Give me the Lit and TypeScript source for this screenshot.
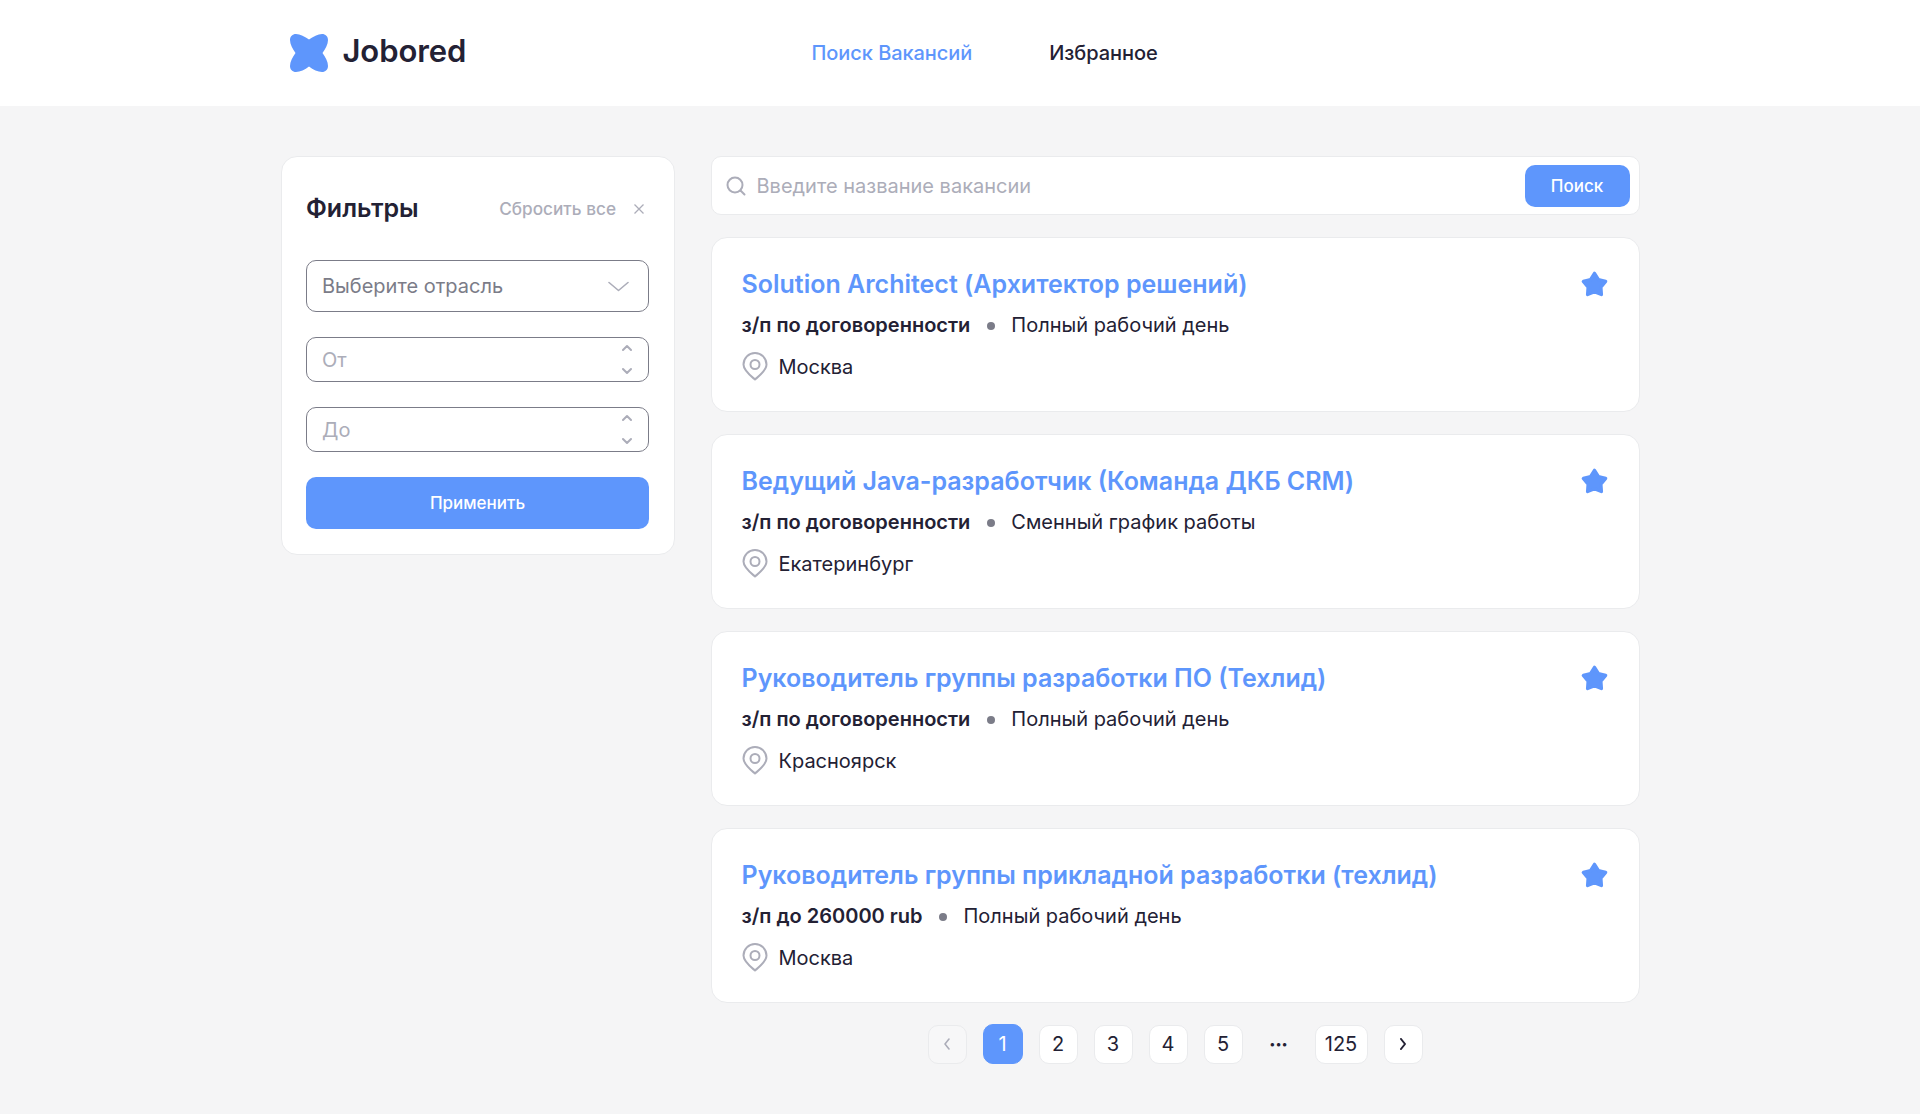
import { css, html, LitElement } from 'lit';
import { customElement } from 'lit/decorators.js';

const vacancies = [
  { title: 'Solution Architect (Архитектор решений)', pay: 'з/п по договоренности', type: 'Полный рабочий день', city: 'Москва' },
  { title: 'Ведущий Java-разработчик (Команда ДКБ CRM)', pay: 'з/п по договоренности', type: 'Сменный график работы', city: 'Екатеринбург' },
  { title: 'Руководитель группы разработки ПО (Техлид)', pay: 'з/п по договоренности', type: 'Полный рабочий день', city: 'Красноярск' },
  { title: 'Руководитель группы прикладной разработки (техлид)', pay: 'з/п до 260000 rub', type: 'Полный рабочий день', city: 'Москва' },
];

const chevron = (d: string, w: number, h: number) => html`
  <svg width=${w} height=${h} viewBox="0 0 ${w} ${h}" fill="none" stroke="currentColor" stroke-width="1.6" stroke-linecap="round" stroke-linejoin="round"><path d=${d}></path></svg>
`;

@customElement('app-root')
export class AppRoot extends LitElement {
  private renderStepper(placeholder: string) {
    return html`
      <div class="field number">
        <input type="text" placeholder=${placeholder} />
        <div class="steps">
          ${chevron('M1 6l4-4 4 4', 10, 8)}
          ${chevron('M1 2l4 4 4-4', 10, 8)}
        </div>
      </div>
    `;
  }

  private renderVacancy(v: (typeof vacancies)[number]) {
    return html`
      <article class="card vacancy">
        <div class="title-row">
          <h2>${v.title}</h2>
          <svg class="star" width="29" height="29" viewBox="0 0 26 26" fill="#5e96fc" stroke="#5e96fc" stroke-width="3" stroke-linejoin="round">
            <path d="M13 3L16.530 8.650L23 10.260L18.710 15.350L19.170 22L13 19.500L6.830 22L7.290 15.350L3 10.260L9.470 8.650Z"></path>
          </svg>
        </div>
        <div class="terms">
          <b>${v.pay}</b>
          <i class="dot"></i>
          <span>${v.type}</span>
        </div>
        <div class="city">
          <svg width="26" height="29" viewBox="0 0 26 29" fill="none" stroke="#acadb9" stroke-width="2">
            <path d="M13 27.500C9 24 1.500 18.500 1.500 12.500A11.500 11.500 0 0 1 24.500 12.500C24.500 18.500 17 24 13 27.500Z" stroke-linejoin="round"></path>
            <circle cx="13" cy="12.500" r="4.500"></circle>
          </svg>
          <span>${v.city}</span>
        </div>
      </article>
    `;
  }

  public render() {
    return html`
      <header>
        <div class="wrap head">
          <div class="brand">
            <svg width="38" height="38" viewBox="0 0 38 38" fill="#5e96fc">
              <path d="M19 5.500C15 2.500 10 0 6 0C2.500 0 0 2.500 0 6C0 10 2.500 15 5.500 19C2.500 23 0 28 0 32C0 35.500 2.500 38 6 38C10 38 15 35.500 19 32.500C23 35.500 28 38 32 38C35.500 38 38 35.500 38 32C38 28 35.500 23 32.500 19C35.500 15 38 10 38 6C38 2.500 35.500 0 32 0C28 0 23 2.500 19 5.500Z"></path>
            </svg>
            <span>Jobored</span>
          </div>
          <nav>
            <a class="active">Поиск Вакансий</a>
            <a>Избранное</a>
          </nav>
        </div>
      </header>

      <main class="wrap">
        <aside class="card filters">
          <div class="filters-head">
            <h3>Фильтры</h3>
            <button class="reset">
              Сбросить все
              <svg width="12" height="12" viewBox="0 0 12 12" fill="none" stroke="currentColor" stroke-width="1.3"><path d="M1.500 1.500l9 9M10.500 1.500l-9 9"></path></svg>
            </button>
          </div>
          <div class="field select">
            <span>Выберите отрасль</span>
            ${chevron('M1 1.500l9.500 8 9.500-8', 21, 11)}
          </div>
          ${this.renderStepper('От')}
          ${this.renderStepper('До')}
          <button class="primary apply">Применить</button>
        </aside>

        <section class="results">
          <div class="card search">
            <svg width="20" height="20" viewBox="0 0 20 20" fill="none" stroke="#acadb9" stroke-width="2" stroke-linecap="round">
              <circle cx="9" cy="9" r="7.500"></circle><path d="M14.500 14.500l4 4"></path>
            </svg>
            <input type="text" placeholder="Введите название вакансии" />
            <button class="primary find">Поиск</button>
          </div>
          ${vacancies.map((v) => this.renderVacancy(v))}
          <div class="pages">
            <span class="page disabled">${chevron('M6 1L2 6l4 5', 8, 12)}</span>
            <span class="page current">1</span>
            <span class="page">2</span>
            <span class="page">3</span>
            <span class="page">4</span>
            <span class="page">5</span>
            <span class="more">•••</span>
            <span class="page wide">125</span>
            <span class="page next">${chevron('M2 1l4 5-4 5', 8, 12)}</span>
          </div>
        </section>
      </main>
    `;
  }

  public static styles = css`
    :host {
      display: block;
      min-height: 1114px;
      background: #f5f5f6;
      color: #232134;
      font-family: Inter, 'Liberation Sans', sans-serif;
    }
    * {
      box-sizing: border-box;
    }
    h2,
    h3 {
      margin: 0;
    }
    input {
      border: 0;
      outline: 0;
      padding: 0;
      width: 0;
      flex: 1;
      background: none;
      font: inherit;
    }
    input::placeholder {
      color: #acadb9;
      opacity: 1;
    }
    button {
      border: 0;
      padding: 0;
      background: none;
      font-family: inherit;
    }
    .wrap {
      width: 1359px;
      margin: 0 auto;
    }
    header {
      height: 106px;
      background: #fff;
    }
    .head {
      display: flex;
      align-items: center;
      height: 100%;
      padding-left: 9px;
    }
    .brand {
      display: flex;
      align-items: center;
      gap: 15px;
      width: 522px;
      margin-top: -1px;
      font-size: 31px;
      font-weight: 600;
      letter-spacing: -0.1px;
      line-height: 38px;
    }
    .brand span {
      margin-top: -4px;
    }
    nav {
      display: flex;
      gap: 77px;
      font-size: 20px;
      font-weight: 500;
      letter-spacing: -0.06px;
    }
    nav .active {
      color: #5e96fc;
    }
    main {
      display: flex;
      align-items: flex-start;
      gap: 36px;
      padding-top: 50px;
    }
    .card {
      background: #fff;
      border: 1px solid #eaebed;
      border-radius: 12px;
    }
    .filters {
      flex: 0 0 394px;
      height: 399px;
      padding: 34px 24.5px 0;
      border-radius: 16px;
    }
    .filters-head {
      display: flex;
      justify-content: space-between;
      align-items: center;
      height: 34px;
      margin-bottom: 35px;
    }
    h3 {
      font-size: 25px;
      font-weight: 600;
    }
    .reset {
      display: flex;
      align-items: center;
      gap: 17px;
      padding-right: 4px;
      margin-top: 1px;
      color: #acadb9;
      font-size: 17.2px;
      font-weight: 500;
    }
    .field {
      display: flex;
      align-items: center;
      border: 1px solid #7b7c88;
      border-radius: 10px;
      padding: 0 15px;
      font-size: 20px;
    }
    .select {
      justify-content: space-between;
      height: 52px;
      margin-bottom: 25px;
      padding-right: 19px;
      color: #7b7c88;
    }
    .select svg {
      color: #acadb9;
    }
    .number {
      height: 45px;
      margin-bottom: 25px;
      padding-right: 16px;
    }
    .steps {
      display: flex;
      flex-direction: column;
      gap: 15px;
      color: #acadb9;
    }
    .steps svg {
      display: block;
      stroke-width: 2;
    }
    .primary {
      background: #5e96fc;
      color: #fff;
      font-weight: 500;
    }
    .apply {
      display: block;
      width: 100%;
      height: 52px;
      border-radius: 10px;
      font-size: 17px;
    }
    .results {
      flex: 1;
      display: flex;
      flex-direction: column;
      gap: 22px;
    }
    .search {
      display: flex;
      align-items: center;
      height: 59px;
      padding: 0 9px 0 14px;
      border-radius: 10px;
      font-size: 20px;
    }
    .search input {
      margin-left: 11px;
    }
    .find {
      width: 105px;
      height: 42px;
      border-radius: 10px;
      font-size: 17px;
    }
    .vacancy {
      height: 175px;
      padding: 29px 30px 0;
      border-radius: 16px;
    }
    .title-row {
      display: flex;
      justify-content: space-between;
      align-items: center;
      height: 34px;
    }
    h2 {
      color: #5e96fc;
      font-size: 25px;
      font-weight: 600;
    }
    .terms {
      display: flex;
      align-items: center;
      height: 24px;
      margin-top: 12px;
      font-size: 20px;
    }
    .terms b {
      font-weight: 600;
    }
    .dot {
      width: 8px;
      height: 8px;
      margin: 2px 16.5px 0;
      border-radius: 50%;
      background: #7b7c88;
    }
    .city {
      display: flex;
      align-items: center;
      gap: 11px;
      margin-top: 15px;
      font-size: 20px;
    }
    .city svg {
      flex: none;
    }
    .pages {
      display: flex;
      justify-content: center;
      align-items: center;
      gap: 16px;
      margin-top: -1px;
      font-size: 20px;
    }
    .page {
      display: flex;
      align-items: center;
      justify-content: center;
      width: 39px;
      height: 39px;
      background: #fff;
      border: 1px solid #eaebed;
      border-radius: 10px;
    }
    .page.wide {
      width: 53px;
    }
    .page.current {
      width: 40px;
      height: 40px;
      background: #5e96fc;
      border-color: #5e96fc;
      color: #fff;
    }
    .page.disabled {
      background: #f7f7f8;
      color: #acadb9;
    }
    .page.next svg {
      stroke-width: 2;
    }
    .more {
      width: 40px;
      text-align: center;
      font-size: 11px;
    }
  `;
}
